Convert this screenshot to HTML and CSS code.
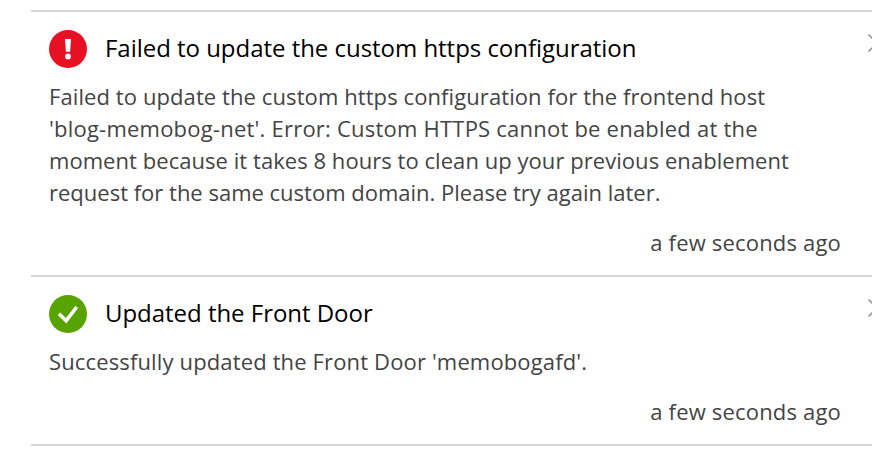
FILE: index.html
```html
<!DOCTYPE html>
<html lang="en">
<head>
  <meta charset="UTF-8" />
  <meta name="viewport" content="width=device-width, initial-scale=1" />
  <title>Notifications</title>
  <link rel="stylesheet" href="styles.css">
</head>
<body>

<div class="notifications">
  <div class="notification">
    <div class="header">
      <svg class="status" viewBox="0 0 38 38">
        <circle cx="19" cy="19" r="19" fill="#e81123"/>
        <path d="M16 9h6l-0.9 12.7h-4.2z" fill="#fff"/>
        <circle cx="19" cy="26.4" r="2.9" fill="#fff"/>
      </svg>
      <h2>Failed to update the custom https configuration</h2>
      <button class="close" aria-label="Dismiss">
        <svg viewBox="0 0 18 18"><path d="M0.5 0.5l17 17M17.5 0.5l-17 17"/></svg>
      </button>
    </div>
    <p class="message">
      <span class="wide">Failed to update the custom https configuration for the frontend host</span><br>
      <span class="widest">'blog-memobog-net'. Error: Custom HTTPS cannot be enabled at the</span><br>
      <span class="slight">moment because it takes 8 hours to clean up your previous enablement</span><br>
      <span>request for the same custom domain. Please try again later.</span>
    </p>
    <div class="time">a few seconds ago</div>
  </div>

  <div class="notification">
    <div class="header">
      <svg class="status" viewBox="0 0 38 38">
        <circle cx="19" cy="19" r="19" fill="#57a300"/>
        <path d="M10 18.7l7.2 7L27.7 12" fill="none" stroke="#fff" stroke-width="3.6"/>
      </svg>
      <h2>Updated the Front Door</h2>
      <button class="close" aria-label="Dismiss">
        <svg viewBox="0 0 18 18"><path d="M0.5 0.5l17 17M17.5 0.5l-17 17"/></svg>
      </button>
    </div>
    <p class="message"><span class="wider">Successfully updated the Front Door 'memobogafd'.</span></p>
    <div class="time">a few seconds ago</div>
  </div>
</div>

</body>
</html>
```
FILE: styles.css
```css
body {
  margin: 0;
  background: #fff;
  color: #444;
  font-family: 'Segoe UI', 'Open Sans', 'Noto Sans', sans-serif;
  font-size: 22px;
  overflow: hidden;
}
.notifications {
  margin: 10px 0 0 31px;
  border-bottom: 2px solid #d6d6d6;
}
.notification {
  border-top: 2px solid #d6d6d6;
  padding: 17px 31px 17px 18px;
}
.header {
  display: flex;
  align-items: center;
  height: 40px;
  margin-right: -45px;
}
.status {
  width: 38px;
  height: 38px;
  margin-right: 18px;
}
h2 {
  flex: 1;
  margin: 0;
  padding-bottom: 4px;
  color: #000;
  font-size: 24px;
  font-weight: 400;
  letter-spacing: -0.03px;
  white-space: nowrap;
}
.close {
  align-self: flex-start;
  width: 18px;
  height: 18px;
  margin-top: 5px;
  padding: 0;
  border: none;
  background: none;
  cursor: pointer;
}
.close svg {
  display: block;
  width: 18px;
  height: 18px;
  fill: none;
  stroke: #888;
  stroke-width: 1.5;
}
.message {
  margin: 11px 0 0;
  line-height: 32px;
  white-space: nowrap;
}
.slight {
  letter-spacing: 0.05px;
}
.wide {
  letter-spacing: 0.09px;
}
.wider {
  letter-spacing: 0.14px;
}
.widest {
  letter-spacing: 0.22px;
}
.time {
  margin-top: 18px;
  line-height: 32px;
  letter-spacing: 0.18px;
  text-align: right;
}
```
